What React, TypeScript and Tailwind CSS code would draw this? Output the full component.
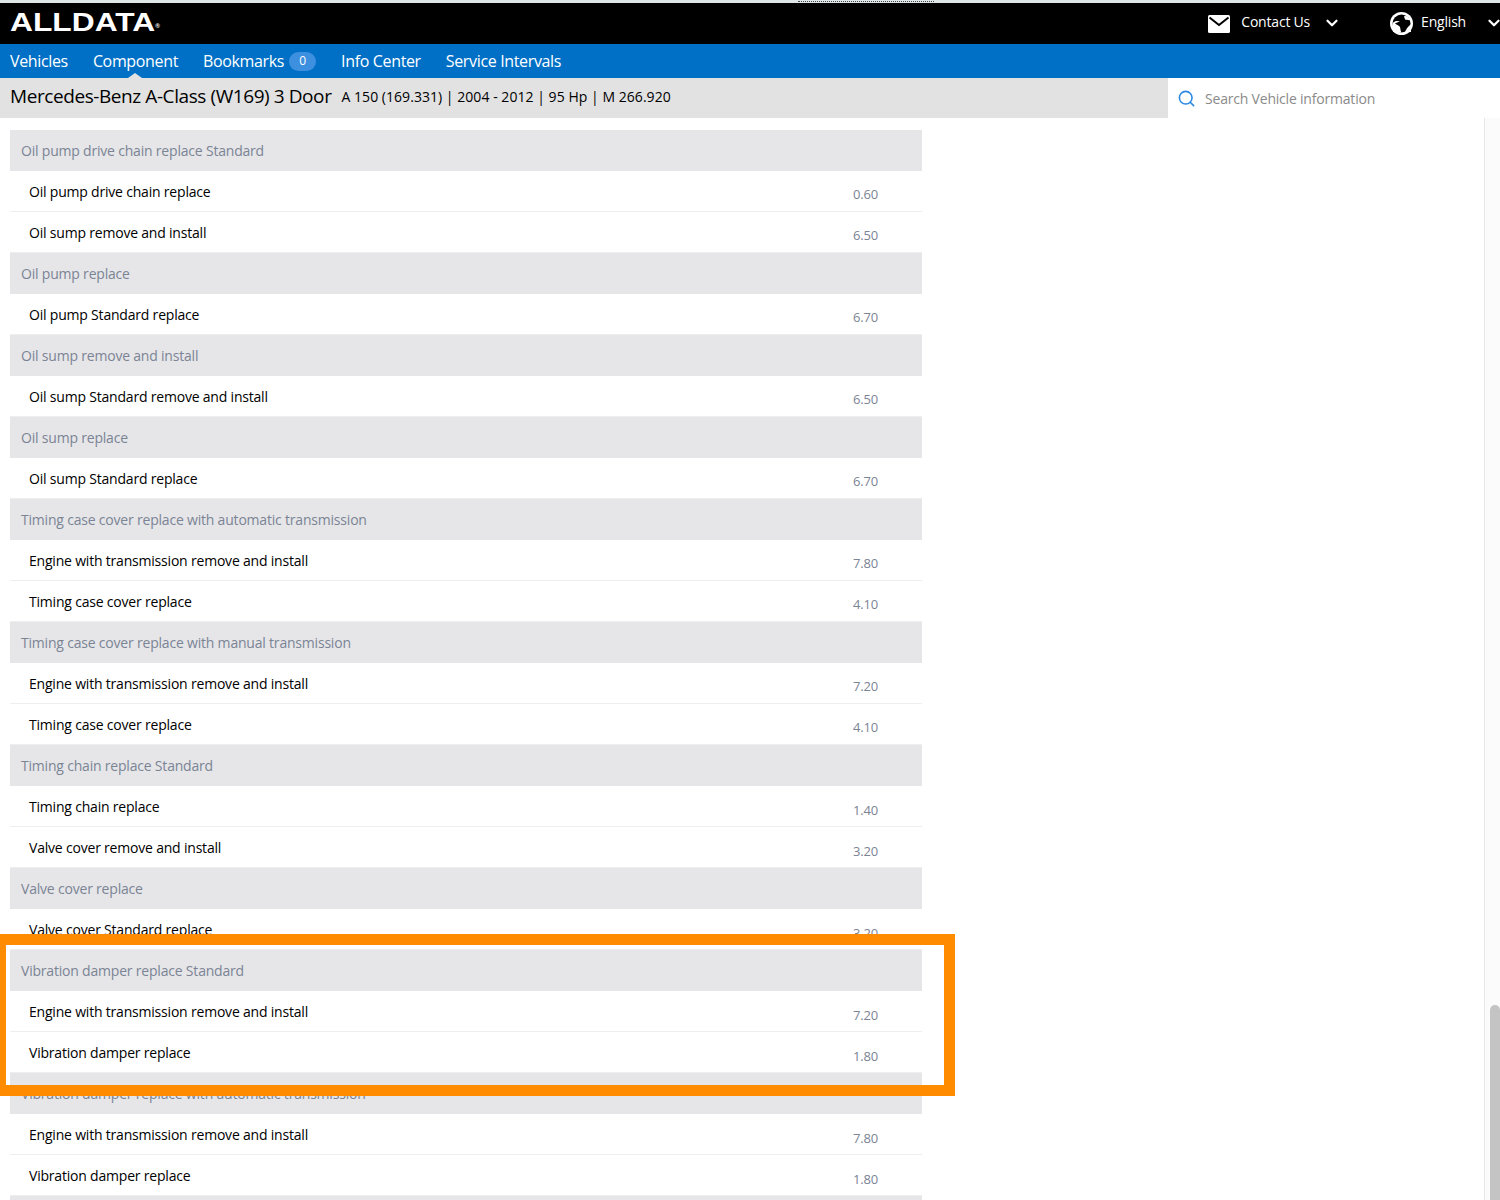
import { ChevronDown, Search } from 'lucide-react';

type Row = { label: string; value?: string };

const rows: Row[] = [
  { label: 'Oil pump drive chain replace Standard' },
  { label: 'Oil pump drive chain replace', value: '0.60' },
  { label: 'Oil sump remove and install', value: '6.50' },
  { label: 'Oil pump replace' },
  { label: 'Oil pump Standard replace', value: '6.70' },
  { label: 'Oil sump remove and install' },
  { label: 'Oil sump Standard remove and install', value: '6.50' },
  { label: 'Oil sump replace' },
  { label: 'Oil sump Standard replace', value: '6.70' },
  { label: 'Timing case cover replace with automatic transmission' },
  { label: 'Engine with transmission remove and install', value: '7.80' },
  { label: 'Timing case cover replace', value: '4.10' },
  { label: 'Timing case cover replace with manual transmission' },
  { label: 'Engine with transmission remove and install', value: '7.20' },
  { label: 'Timing case cover replace', value: '4.10' },
  { label: 'Timing chain replace Standard' },
  { label: 'Timing chain replace', value: '1.40' },
  { label: 'Valve cover remove and install', value: '3.20' },
  { label: 'Valve cover replace' },
  { label: 'Valve cover Standard replace', value: '3.20' },
  { label: 'Vibration damper replace Standard' },
  { label: 'Engine with transmission remove and install', value: '7.20' },
  { label: 'Vibration damper replace', value: '1.80' },
  { label: 'Vibration damper replace with automatic transmission' },
  { label: 'Engine with transmission remove and install', value: '7.80' },
  { label: 'Vibration damper replace', value: '1.80' },
  { label: '' },
];

function MailIcon() {
  return (
    <svg width="22" height="18" viewBox="0 0 22 18">
      <rect x="0" y="0" width="22" height="18" rx="1.5" fill="#fff" />
      <path d="M1.5 2.5 L11 10 L20.5 2.5" fill="none" stroke="#000" strokeWidth="2" />
    </svg>
  );
}

function GlobeIcon() {
  return (
    <svg width="23" height="23" viewBox="0 0 23 23">
      <circle cx="11.5" cy="11.5" r="11.5" fill="#fff" />
      <circle cx="11.5" cy="11.5" r="9" fill="#000" />
      <path d="M2.5 11 C5 8.5 8 8.5 10 9.5 C8 10.5 6 10.5 5 11.5 C7 13 9 13.5 10 15 C10.5 17 10.5 19 11.5 20.5 L3 20 Z" fill="#fff" />
      <path d="M14 4.5 C16 3 19 5 20.5 8 C18.5 8.5 17.5 7.5 16 8 C15 7.5 14.5 6 14 4.5 Z" fill="#fff" />
      <path d="M15 20.5 C16 17.5 17.5 15 20.5 12.5 L21 20 Z" fill="#fff" />
    </svg>
  );
}

export default function App() {
  return (
    <div className="relative h-[1200px] overflow-hidden bg-white font-['Open_Sans',sans-serif] text-black">
      {/* top bar */}
      <div className="h-[3px] bg-[#dfe7e6]" />
      <div className="flex h-[41px] items-center bg-black pl-[10px] text-white">
        <span className="mt-[-3px] inline-block origin-left scale-x-[1.27] font-['Liberation_Sans',sans-serif] text-[25px] leading-none font-bold">
          ALLDATA<sup className="text-[5px]">®</sup>
        </span>
        <div className="ml-auto flex items-center">
          <MailIcon />
          <span className="mt-[-4px] ml-[11px] text-[14px] tracking-[-0.2px]">Contact Us</span>
          <ChevronDown className="mt-[-1px] ml-[13px] h-[18px] w-[18px]" strokeWidth={3} />
          <div className="ml-[49px]"><GlobeIcon /></div>
          <span className="mt-[-4px] ml-[8px] text-[14px] tracking-[-0.2px]">English</span>
          <ChevronDown className="mt-[-1px] mr-[-3px] ml-[19px] h-[18px] w-[18px]" strokeWidth={3} />
        </div>
      </div>

      {/* nav */}
      <div className="flex h-[34px] items-center gap-[25px] bg-[#0070c6] pb-[1px] pl-[10px] text-[16px] tracking-[-0.35px] text-white">
        <span>Vehicles</span>
        <span className="relative">
          Component
          <span className="absolute bottom-[-5px] left-[35px] h-0 w-0 border-x-[7px] border-b-[5px] border-x-transparent border-b-[#e2e2e2]" />
        </span>
        <span className="flex items-center gap-[5px]">
          Bookmarks
          <span className="mt-[1px] flex h-[19px] w-[27px] items-center justify-center rounded-full bg-[#3d8fe0] text-[12px]">0</span>
        </span>
        <span>Info Center</span>
        <span>Service Intervals</span>
      </div>

      {/* vehicle bar */}
      <div className="flex h-[40px]">
        <div className="flex w-[1168px] items-center bg-[#e2e2e2] pb-[3px] pl-[10px]">
          <span className="text-[19px] tracking-[-0.42px]">Mercedes-Benz A-Class (W169) 3 Door</span>
          <span className="ml-[10px] text-[14px] tracking-[0.04px]">A 150 (169.331) | 2004 - 2012 | 95 Hp | M 266.920</span>
        </div>
        <div className="flex flex-1 items-center pl-[9px]">
          <Search className="h-[19px] w-[19px] text-[#2b88e0]" strokeWidth={2} />
          <span className="ml-[9px] text-[14px] tracking-[-0.2px] text-[#8a8a8a]">Search Vehicle information</span>
        </div>
      </div>

      {/* list + scrollbar */}
      <div className="flex h-[1082px]">
        <div className="flex-1 pt-[12px] pl-[10px]">
          <div className="w-[912px]">
            {rows.map((r, i) =>
              r.value ? (
                <div key={i} className="flex h-[41.03px] items-center justify-between border-b border-[#eeeeee] pt-[1px] pr-[44px] pl-[19px] text-[14px] tracking-[-0.2px]">
                  <span>{r.label}</span>
                  <span className="pt-[7px] text-[13px] text-[#7b8494]">{r.value}</span>
                </div>
              ) : (
                <div key={i} className="flex h-[41.03px] items-center bg-[#e6e6e9] pl-[11px] text-[14px] tracking-[-0.2px] text-[#7b8494]">
                  {r.label}
                </div>
              ),
            )}
          </div>
        </div>
        <div className="w-[16px] border-l border-[#e6e6e6] bg-[#fbfbfb] pt-[887px] pl-[5px]">
          <div className="h-[195px] rounded-t-[6px] bg-[#c4c4c4]" />
        </div>
      </div>

      {/* cut off marks along the top edge */}
      <div className="absolute top-[1px] left-[798px] w-[136px] border-t border-dotted border-[#444444]" />

      {/* orange highlight box */}
      <div className="absolute top-[934px] left-0 h-[162px] w-[955px] border-y-[11px] border-r-[11px] border-l-[6px] border-[#ff8c00]" />
    </div>
  );
}
